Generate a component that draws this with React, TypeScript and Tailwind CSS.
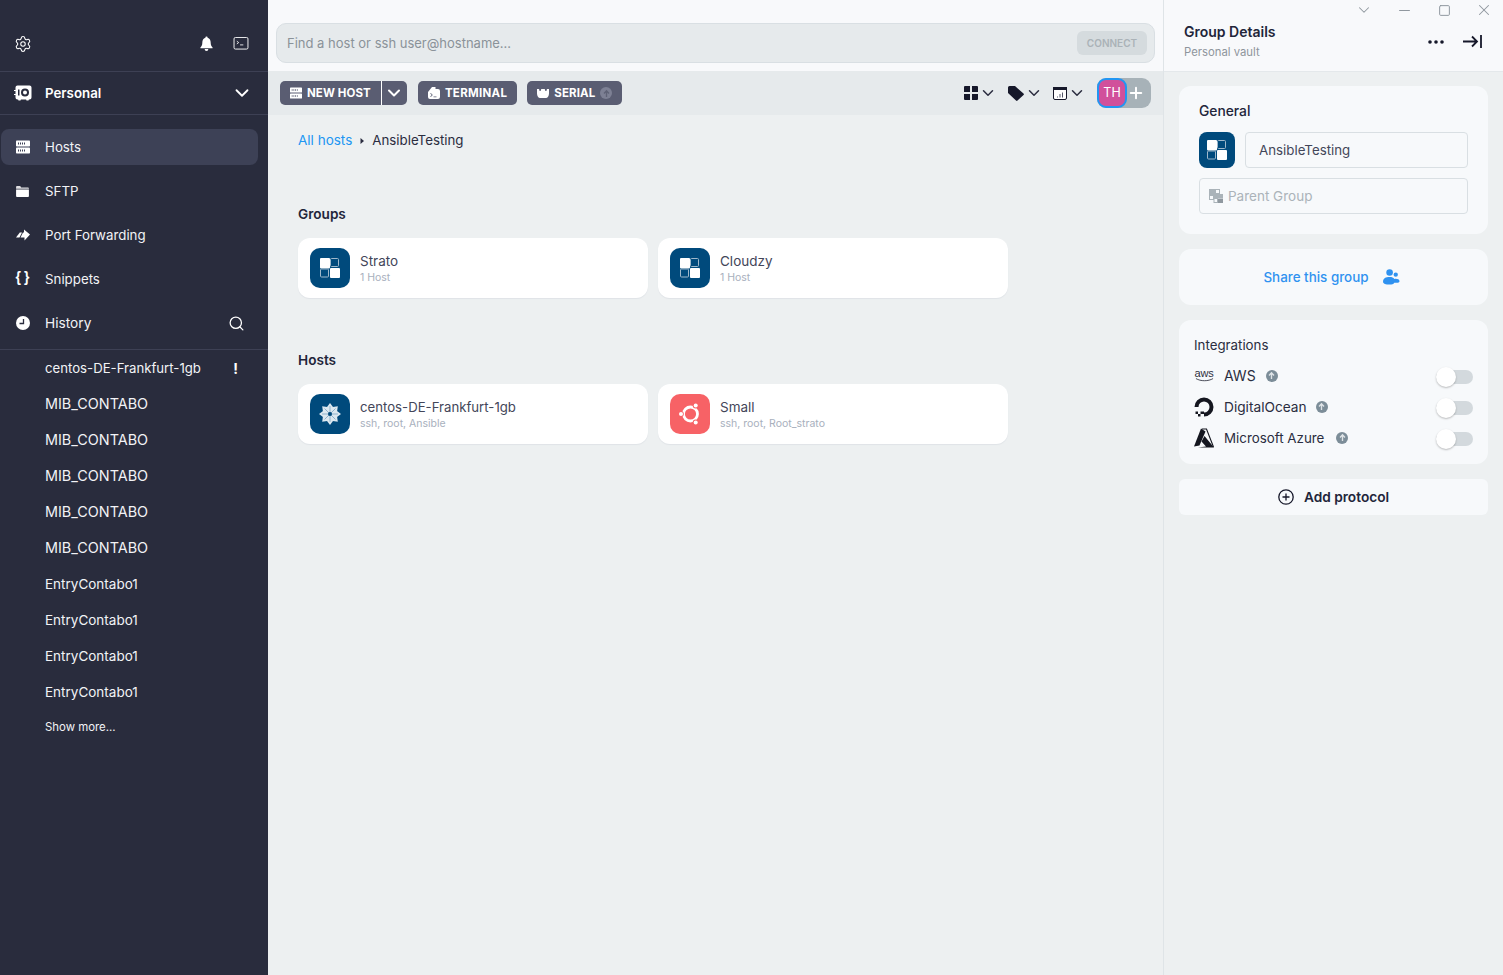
import React from "react";
import { Settings, ChevronDown, Search, Minus, X, Square, Plus } from "lucide-react";

const HostsIcon = ({ className = "", hole = "#292c3d" }: { className?: string; hole?: string }) => (
  <svg viewBox="0 0 14 14" className={className}>
    <rect x="0" y="0.5" width="14" height="6" rx="0.8" fill="currentColor" />
    <rect x="0" y="7.5" width="14" height="6" rx="0.8" fill="currentColor" />
    <path d="M2 2.5h1v2H2zM4 2.5h1v2H4zM6 2.5h1v2H6zM8 2.5h1v2H8zM2 9.5h1v2H2zM4 9.5h1v2H4zM6 9.5h1v2H6zM8 9.5h1v2H8z" fill={hole} />
  </svg>
);

const VaultIcon = () => (
  <svg viewBox="0 0 18 16" className="w-[18px] h-[16px]">
    <path fillRule="evenodd" clipRule="evenodd" fill="#fff" d="M3.5 0.5h12a2 2 0 0 1 2 2v10a2 2 0 0 1-2 2h-.6l-.4 1h-2l-.4-1H6.9l-.4 1h-2l-.4-1h-.6a2 2 0 0 1-2-2V10H0V9h1.500V6H0V5h1.500V2.500a2 2 0 0 1 2-2zM11 3.500a4 4 0 1 0 0 8 4 4 0 0 0 0-8zm0 2a2 2 0 1 1 0 4 2 2 0 0 1 0-4zM5.500 4.500H4v6h1.500z" />
  </svg>
);

const FolderIcon = () => (
  <svg viewBox="0 0 14 12" className="w-[13px] h-[11px]">
    <path d="M0 1a1 1 0 0 1 1-1h3.500l1 1.500H13a1 1 0 0 1 1 1V3H0z" fill="#fff" opacity="0.85" />
    <path d="M0 3.800h14V11a1 1 0 0 1-1 1H1a1 1 0 0 1-1-1z" fill="#fff" />
  </svg>
);

const PortIcon = () => (
  <svg viewBox="0 0 14 12" className="w-[14px] h-[12px]">
    <path d="M8 0.500L14 5.500 8.500 11.500V8.500H4.500L7 3.500H8z" fill="#fff" />
    <path d="M3.800 3.500H6L3.500 8.500H0z" fill="#fff" />
  </svg>
);

const ClockIcon = () => (
  <svg viewBox="0 0 14 14" className="w-[14px] h-[14px]">
    <circle cx="7" cy="7" r="7" fill="#fff" />
    <path d="M7.500 3v4.500H3.500" fill="none" stroke="#292c3d" strokeWidth="1.300" />
  </svg>
);

const BellIcon = () => (
  <svg viewBox="0 0 14 16" className="w-[13px] h-[16px]">
    <path d="M7 0a1.200 1.200 0 0 1 1.200 1.300C10.500 2 11.500 4 11.500 6.500c0 3 .8 4.200 2 5.300.3.3.2.9-.4.9H.9c-.6 0-.7-.6-.4-.9 1.200-1.100 2-2.300 2-5.300C2.500 4 3.500 2 5.800 1.300A1.200 1.200 0 0 1 7 0zM5 13.500h4a2 2 0 0 1-4 0z" fill="#fff" />
  </svg>
);

const TermBox = () => (
  <svg viewBox="0 0 16 14" className="w-4 h-[13px]" fill="none" stroke="#fff">
    <rect x="0.500" y="0.500" width="15" height="12.500" rx="1.500" />
    <path d="M3.500 4.500L5.500 6 3.500 7.500M7 8.500h3.500" strokeWidth="0.900" />
  </svg>
);

const GroupGlyph = ({ size = 20 }: { size?: number }) => (
  <svg viewBox="0 0 20 20" width={size} height={size}>
    <rect x="0" y="0" width="10" height="10.500" rx="1" fill="#fff" />
    <rect x="10.500" y="0.500" width="8" height="8" rx="1" fill="none" stroke="#9fb8cb" />
    <rect x="0.500" y="11" width="8" height="8" rx="1" fill="none" stroke="#9fb8cb" />
    <rect x="10" y="10" width="10" height="10" rx="1" fill="#fff" />
  </svg>
);

const GroupTile = ({ tile = "w-10 h-10 rounded-[10px]", size = 20 }: { tile?: string; size?: number }) => (
  <div className={`${tile} bg-[#004a7c] flex items-center justify-center shrink-0`}>
    <GroupGlyph size={size} />
  </div>
);

const CentosTile = () => (
  <div className="w-10 h-10 rounded-[10px] bg-[#004a7c] flex items-center justify-center shrink-0">
    <svg viewBox="0 0 22 22" className="w-[22px] h-[22px]">
      <g fill="#dce8f0">
        <rect x="6.500" y="6.500" width="9" height="9" />
        <path d="M11 0l3 4v4h-6V4zM11 22l3-4v-4h-6v4zM0 11l4-3h4v6H4zM22 11l-4-3h-4v6h4z" />
        <path d="M3.200 3.200l5 .7 2 2-4.300 4.300-2-2zM18.800 3.200l-5 .7-2 2 4.300 4.300 2-2zM3.200 18.800l5-.7 2-2-4.300-4.300-2 2zM18.800 18.800l-5-.7-2-2 4.300-4.300 2 2z" />
      </g>
      <path d="M11 3v16M3 11h16M5.500 5.500l11 11M16.500 5.500l-11 11" stroke="#6f9cbc" strokeWidth="0.700" />
      <circle cx="11" cy="11" r="2" fill="#004a7c" />
    </svg>
  </div>
);

const UbuntuTile = () => (
  <div className="w-10 h-10 rounded-[10px] bg-[#f76266] flex items-center justify-center shrink-0">
    <svg viewBox="0 0 24 24" className="w-6 h-6">
      <circle cx="12.500" cy="12" r="7" fill="none" stroke="#fff" strokeWidth="2.800" />
      <circle cx="2.800" cy="12" r="3" fill="#f76266" />
      <circle cx="17.700" cy="3.500" r="3" fill="#f76266" />
      <circle cx="17.700" cy="20.500" r="3" fill="#f76266" />
      <circle cx="3" cy="12" r="2" fill="#fff" />
      <circle cx="17.700" cy="3.500" r="2" fill="#fff" />
      <circle cx="17.700" cy="20.500" r="2" fill="#fff" />
    </svg>
  </div>
);

const UpBadge = ({ className = "", arrow = "#dfe4e7" }: { className?: string; arrow?: string }) => (
  <span className={`w-3 h-3 rounded-full inline-flex items-center justify-center shrink-0 ${className}`}>
    <svg viewBox="0 0 8 8" className="w-[9px] h-[9px]"><path d="M4 7.200V2M1.800 4L4 1.600 6.200 4" stroke={arrow} strokeWidth="1.200" fill="none" /></svg>
  </span>
);

const NavRow = ({ icon, label, active, right, size = "text-[13.3px]" }: { icon: React.ReactNode; label: string; active?: boolean; right?: React.ReactNode; size?: string }) => (
  <div className={`h-9 ml-[1px] mr-[10px] rounded-lg flex items-center pl-[14px] pr-[13px] ${active ? "bg-[#3d4156]" : ""}`}>
    <span className="w-[15px] flex items-center justify-center shrink-0">{icon}</span>
    <span className={`ml-[15px] pt-[1px] ${size} text-[#f2f3f6] flex-1`}>{label}</span>
    {right}
  </div>
);

const HostCard = ({ tile, title, sub, size = "text-[13.5px]" }: { tile: React.ReactNode; title: string; sub: string; size?: string }) => (
  <div className="w-[350px] h-[60px] bg-white rounded-[12px] shadow-[0_1px_1px_#dfe3e7] flex items-center px-3">
    {tile}
    <div className="ml-[10px] pt-[2px] flex flex-col">
      <span className={`${size} leading-[17px] text-[#434659]`}>{title}</span>
      <span className="text-[10.500px] leading-[14px] mt-[0.5px] text-[#a8b0bd]">{sub}</span>
    </div>
  </div>
);

const Toggle = () => (
  <div className="w-[37px] h-[14px] rounded-full bg-[#d3d9dd] relative">
    <div className="absolute left-0 top-[-3px] w-5 h-5 rounded-full bg-white shadow-[0_1px_2px_rgba(0,0,0,0.25)]" />
  </div>
);

const AwsIcon = () => (
  <span className="w-[20px] flex flex-col items-center text-[#2f3140] leading-none">
    <span className="text-[11px] leading-[9px] tracking-[-0.2px]" style={{ fontFamily: "'Liberation Sans', sans-serif" }}>aws</span>
    <svg viewBox="0 0 20 4" className="w-[19px] h-[4px]"><path d="M1 .5C6 3.500 14 3.500 19 .5" stroke="#2f3140" fill="none" strokeWidth="0.900" /></svg>
  </span>
);

const DoIcon = () => (
  <svg viewBox="0 0 20 20" className="w-[20px] h-[20px]">
    <path d="M10 19.500v-4a5.500 5.500 0 1 0-5.500-5.500H.5a9.500 9.500 0 1 1 9.500 9.500z" fill="#14161f" />
    <path d="M6.500 14.500h3.500V17H6.500zM4 17h2.500v2.500H4zM1.500 14.500H4V17H1.500z" fill="#14161f" />
  </svg>
);

const AzureIcon = () => (
  <svg viewBox="0 0 20 20" className="w-[20px] h-[20px]">
    <path d="M7 0.500L0 18.500l5.500-1L11.500 3.500z" fill="#14161f" />
    <path d="M10.500 8L7.500 13.500l4.500 5-8 1h16z" fill="#14161f" />
    <path d="M8 1h4.500l7 18" fill="none" stroke="#14161f" strokeWidth="1.100" />
  </svg>
);

const Integration = ({ icon, name, gap, size, nudge = "" }: { icon: React.ReactNode; name: string; gap: string; size: string; nudge?: string }) => (
  <div className="h-[31px] flex items-center">
    <span className="w-[20px] flex items-center justify-center">{icon}</span>
    <span className={`ml-[10px] ${size} ${nudge} text-[#2a2d40]`}>{name}</span>
    <UpBadge className={`bg-[#7c8d98] ${gap}`} />
    <div className="ml-auto pt-[2px]"><Toggle /></div>
  </div>
);

const recents = [
  { t: "centos-DE-Frankfurt-1gb", s: "text-[13.200px] pt-[1px]" },
  { t: "MIB_CONTABO", s: "text-[14.400px]" },
  { t: "MIB_CONTABO", s: "text-[14.400px]" },
  { t: "MIB_CONTABO", s: "text-[14.400px]" },
  { t: "MIB_CONTABO", s: "text-[14.400px]" },
  { t: "MIB_CONTABO", s: "text-[14.400px]" },
  { t: "EntryContabo1", s: "text-[13.500px] pt-[1px]" },
  { t: "EntryContabo1", s: "text-[13.500px] pt-[1px]" },
  { t: "EntryContabo1", s: "text-[13.500px] pt-[1px]" },
  { t: "EntryContabo1", s: "text-[13.500px] pt-[1px]" },
];

const ToolChevron = () => <ChevronDown className="w-[18px] h-[18px] text-[#2b2d40]" strokeWidth={2} />;

export default function App() {
  return (
    <div className="w-[1503px] h-[975px] flex overflow-hidden bg-[#edf0f1]" style={{ fontFamily: "Inter, sans-serif" }}>
      {/* Sidebar */}
      <aside className="w-[268px] shrink-0 bg-[#292c3d] flex flex-col">
        <div className="h-[72px] border-b border-[#3d4054] flex items-center pl-[14px] pr-[19px] pt-[16px]">
          <Settings className="w-[18px] h-[18px] text-white" strokeWidth={1.4} />
          <span className="ml-auto"><BellIcon /></span>
          <span className="ml-[20px]"><TermBox /></span>
        </div>
        <div className="h-[43px] border-b border-[#3d4054] flex items-center pl-[14px] pr-[15px]">
          <VaultIcon />
          <span className="ml-[13px] pt-[1px] text-[13.300px] font-semibold text-white flex-1">Personal</span>
          <ChevronDown className="w-[22px] h-[22px] text-white" strokeWidth={2} />
        </div>
        <nav className="pt-[14px] flex flex-col gap-2 pb-[8px] border-b border-[#3d4054]">
          <NavRow active icon={<HostsIcon className="w-[14px] h-[14px] text-white" hole="#3d4156" />} label="Hosts" />
          <NavRow icon={<FolderIcon />} label="SFTP" />
          <NavRow icon={<PortIcon />} label="Port Forwarding" />
          <NavRow icon={<span className="pb-[3px] text-[14px] font-bold text-white tracking-[3px] ml-[3px]" style={{ fontFamily: "'Liberation Sans', sans-serif" }}>{"{}"}</span>} label="Snippets" />
          <NavRow icon={<ClockIcon />} label="History" size="text-[13.700px]" right={<Search className="w-[17px] h-[17px] text-white" strokeWidth={1.8} />} />
        </nav>
        <div className="flex flex-col">
          {recents.map((r, i) => (
            <div key={i} className="h-9 flex items-center pl-[45px] pr-[30px] text-[#f2f3f6]">
              <span className={`flex-1 ${r.s}`}>{r.t}</span>
              {i === 0 && <span className="font-bold text-white text-[14px]">!</span>}
            </div>
          ))}
          <div className="h-[34px] mt-[1px] flex items-center pl-[45px] text-[11.400px] text-[#f2f3f6]">Show more...</div>
        </div>
      </aside>

      {/* Main */}
      <main className="flex-1 min-w-0 flex flex-col border-r border-[#dfe4e7]">
        <div className="h-[71px] bg-[#f8f9fb] flex items-end px-2 pb-2">
          <div className="w-full h-10 rounded-[10px] border border-[#d9dfe3] bg-[#e6eaec] flex items-center pl-[10px] pr-[7px]">
            <span className="text-[13px] pt-[1px] text-[#8a9299] flex-1">Find a host or ssh user@hostname...</span>
            <span className="h-6 w-[70px] justify-center rounded-md bg-[#d5dbde] text-[10px] font-semibold text-[#aab2b7] flex items-center">CONNECT</span>
          </div>
        </div>
        <div className="h-[44px] bg-[#e6eaec] flex items-center pl-3 pr-3">
          <div className="flex h-6 rounded-[5px] bg-[#5a5d72] items-center text-white text-[11.500px] font-bold">
            <span className="flex items-center pl-[10px] pr-[10px] h-full border-r border-white">
              <HostsIcon className="w-3 h-3 text-white" hole="#5a5d72" />
              <span className="ml-[5px] pt-[1px] tracking-[0.1px]">NEW HOST</span>
            </span>
            <span className="w-[25px] flex items-center justify-center"><ChevronDown className="w-[20px] h-[20px]" strokeWidth={2.4} /></span>
          </div>
          <div className="ml-[11px] flex h-6 rounded-[5px] bg-[#5a5d72] items-center text-white text-[11.500px] font-bold px-[10px]">
            <svg viewBox="0 0 12 12" className="w-3 h-3">
              <path fillRule="evenodd" d="M4 0h3.500v2H10a2 2 0 0 1 2 2v6a2 2 0 0 1-2 2H2a2 2 0 0 1-2-2V5zM2.200 6.500L3.800 8 2.200 9.500l.6.500 2-2-2-2zM5.500 9.500v.7h3v-.7z" fill="#fff" />
            </svg>
            <span className="ml-[5px] pt-[1px] tracking-[0.3px]">TERMINAL</span>
          </div>
          <div className="ml-[10px] flex h-6 rounded-[5px] bg-[#5a5d72] items-center text-white text-[11.500px] font-bold px-[10px]">
            <svg viewBox="0 0 12 9" className="w-3 h-[9px]">
              <path d="M0 0h2l.6 2h1L4.300 0h3.400l.7 2h1L10 0h2v4.500C12 7 10.500 9 9 9H3C1.500 9 0 7 0 4.500z" fill="#fff" />
            </svg>
            <span className="ml-[5px] pt-[1px] tracking-[0.1px]">SERIAL</span>
            <UpBadge className="bg-[#7d8094] ml-[5px]" arrow="#5f6276" />
          </div>
          <div className="ml-auto flex items-center">
            <svg viewBox="0 0 14 14" className="w-[14px] h-[14px]"><path d="M0 1a1 1 0 0 1 1-1h5v6H0zM8 0h5a1 1 0 0 1 1 1v5H8zM0 8h6v6H1a1 1 0 0 1-1-1zM8 8h6v5a1 1 0 0 1-1 1H8z" fill="#16182a" /></svg>
            <span className="ml-[1px]"><ToolChevron /></span>
            <svg viewBox="0 0 16 15" className="w-4 h-[15px] ml-[11px]"><path d="M0 1.500A1.500 1.500 0 0 1 1.500 0H7l8.500 7.500a1 1 0 0 1 0 1.500L9.500 14.500a1 1 0 0 1-1.500 0L0 7z" fill="#16182a" /></svg>
            <span className="ml-[1px]"><ToolChevron /></span>
            <svg viewBox="0 0 14 13" className="w-[14px] h-[13px] ml-[10px]"><rect x="0.500" y="0.500" width="13" height="12" rx="1.500" fill="#fff" stroke="#16182a" /><rect x="0" y="0" width="14" height="3" fill="#16182a" /><path d="M4 9.500h1v1H4zM6.500 7h1v3.500h-1zM9 5.500h1v5H9z" fill="#55586a" /></svg>
            <span className="ml-[1px]"><ToolChevron /></span>
            <div className="ml-[11px] flex items-center relative h-[30px] w-[54px] rounded-[9px] bg-[#a7b2b8]">
              <div className="absolute left-0 top-0 w-[30px] h-[30px] rounded-[9px] border-[2px] border-[#2196f3] bg-[#d1509b] text-white text-[12.500px] flex items-center justify-center">TH</div>
              <Plus className="absolute right-[6px] top-[6px] w-[18px] h-[18px] text-white" strokeWidth={2.6} />
            </div>
          </div>
        </div>
        <div className="flex-1 pl-[30px] pt-[17px]">
          <div className="flex items-center leading-[17px]">
            <span className="text-[13.500px] text-[#2196f3]">All hosts</span>
            <svg viewBox="0 0 4 6" className="w-1 h-[6px] ml-[8px] mr-[8px]"><path d="M0.500 0L4 3 .500 6z" fill="#2b2d40" /></svg>
            <span className="text-[13.300px] text-[#2b2d40]">AnsibleTesting</span>
          </div>
          <h2 className="mt-[57px] text-[13.600px] leading-[17px] font-semibold text-[#22253a]">Groups</h2>
          <div className="mt-[15px] flex gap-[10px]">
            <HostCard tile={<GroupTile />} title="Strato" sub="1 Host" />
            <HostCard tile={<GroupTile />} title="Cloudzy" sub="1 Host" />
          </div>
          <h2 className="mt-[54px] text-[13.600px] leading-[17px] font-semibold text-[#22253a]">Hosts</h2>
          <div className="mt-[15px] flex gap-[10px]">
            <HostCard tile={<CentosTile />} title="centos-DE-Frankfurt-1gb" sub="ssh, root, Ansible" size="text-[13.200px]" />
            <HostCard tile={<UbuntuTile />} title="Small" sub="ssh, root, Root_strato" />
          </div>
        </div>
      </main>

      {/* Right panel */}
      <section className="w-[339px] shrink-0 flex flex-col">
        <div className="h-[72px] shrink-0 bg-[#f8f9fb] border-b border-[#e4e8eb] pl-[20px] flex flex-col">
          <div className="flex items-center justify-end h-[20px] text-[#8f979e] shrink-0">
            <span className="w-10 flex justify-center"><ChevronDown className="w-[18px] h-[18px]" strokeWidth={1.4} /></span>
            <span className="w-10 flex justify-center"><Minus className="w-[17px] h-[17px]" strokeWidth={1.4} /></span>
            <span className="w-10 flex justify-center"><Square className="w-[13px] h-[13px]" strokeWidth={1.8} /></span>
            <span className="w-[39px] flex justify-center"><X className="w-[18px] h-[18px]" strokeWidth={1.4} /></span>
          </div>
          <div className="flex items-start">
            <div className="flex flex-col">
              <span className="text-[14px] leading-[17px] mt-[3px] font-semibold text-[#22253a]">Group Details</span>
              <span className="text-[11.300px] leading-[15px] mt-[5px] text-[#8e959c]">Personal vault</span>
            </div>
            <div className="ml-auto flex items-center pr-[21px] mt-[15px]">
              <svg viewBox="0 0 16 4" className="w-4 h-1"><circle cx="2" cy="2" r="1.800" fill="#16182a" /><circle cx="8" cy="2" r="1.800" fill="#16182a" /><circle cx="14" cy="2" r="1.800" fill="#16182a" /></svg>
              <svg viewBox="0 0 19 13" className="w-[19px] h-[13px] ml-[19px]" fill="none" stroke="#16182a" strokeWidth="1.800"><path d="M0 6.500H14M9 1.500l5 5-5 5M18 0v13" /></svg>
            </div>
          </div>
        </div>
        <div className="flex-1 px-[15px] pt-[14px] flex flex-col gap-[15px] bg-[#edf0f1]">
          <div className="h-[148px] rounded-[12px] bg-[#f7f9fb] px-5 pt-[17px]">
            <div className="text-[13.800px] leading-[17px] font-medium text-[#22253a]">General</div>
            <div className="mt-[12px] flex items-center gap-[10px]">
              <GroupTile tile="w-9 h-9 rounded-[8px]" size={20} />
              <div className="flex-1 h-9 rounded-[4px] border border-[#d9dfe3] flex items-center pl-[13px] pt-[1px] text-[13.300px] text-[#434659]">AnsibleTesting</div>
            </div>
            <div className="mt-[10px] h-9 rounded-[4px] border border-[#d9dfe3] flex items-center pl-[9px] text-[#abb3b9]">
              <svg viewBox="0 0 14 14" className="w-[14px] h-[14px]">
                <rect x="0" y="0" width="6" height="6" fill="#aab3b9" /><rect x="6.500" y="0.500" width="4" height="4" fill="none" stroke="#aab3b9" /><rect x="0.500" y="6.500" width="4" height="4" fill="none" stroke="#aab3b9" /><rect x="5" y="5" width="4" height="4" fill="#aab3b9" /><rect x="9" y="5" width="5" height="4" fill="#aab3b9" /><rect x="9" y="9.500" width="5" height="4.500" fill="#8f989f" /><rect x="5" y="9.500" width="3.500" height="4" fill="none" stroke="#aab3b9" />
              </svg>
              <span className="ml-[5px] text-[13.500px] pt-[1px]">Parent Group</span>
            </div>
          </div>
          <div className="h-[56px] rounded-[12px] bg-[#f7f9fb] flex items-center justify-center">
            <span className="text-[13.400px] font-medium pt-[1px] text-[#2f92f0]">Share this group</span>
            <svg viewBox="0 0 18 17" className="w-[17px] h-[16px] ml-[14px] mr-[4px]">
              <circle cx="7" cy="3.800" r="3.500" fill="#2f92f0" /><circle cx="13.500" cy="6" r="2.300" fill="#2f92f0" />
              <path d="M0 13.500C0 10 3 8.500 7 8.500c2.500 0 4 .7 5 2 2-.5 5.500 0 5.500 2.500 0 1.500-1.500 1.500-3 1.500h-2.500c-1 1.500-2.500 2-5 2-4 0-7-.7-7-3z" fill="#2f92f0" />
            </svg>
          </div>
          <div className="h-[144px] rounded-[12px] bg-[#f7f9fb] pl-[15px] pr-[15px] pt-[17px]">
            <div className="text-[13.300px] leading-[17px] text-[#2a2d40] mb-[6px]">Integrations</div>
            <Integration icon={<AwsIcon />} name="AWS" gap="ml-[10px]" size="text-[14px]" />
            <Integration icon={<DoIcon />} name="DigitalOcean" gap="ml-[9px]" size="text-[13.700px]" nudge="pt-[1px]" />
            <Integration icon={<AzureIcon />} name="Microsoft Azure" gap="ml-[12px]" size="text-[13.350px]" nudge="pt-[1px]" />
          </div>
          <div className="h-[36px] rounded-[6px] bg-[#f7f9fb] flex items-center justify-center">
            <svg viewBox="0 0 16 16" className="w-4 h-4" fill="none" stroke="#16182a" strokeWidth="1.300"><circle cx="8" cy="8" r="7.200" /><path d="M8 4.500v7M4.500 8h7" /></svg>
            <span className="ml-[10px] pt-[1px] text-[13.700px] font-semibold text-[#22253a]">Add protocol</span>
          </div>
        </div>
      </section>
    </div>
  );
}
